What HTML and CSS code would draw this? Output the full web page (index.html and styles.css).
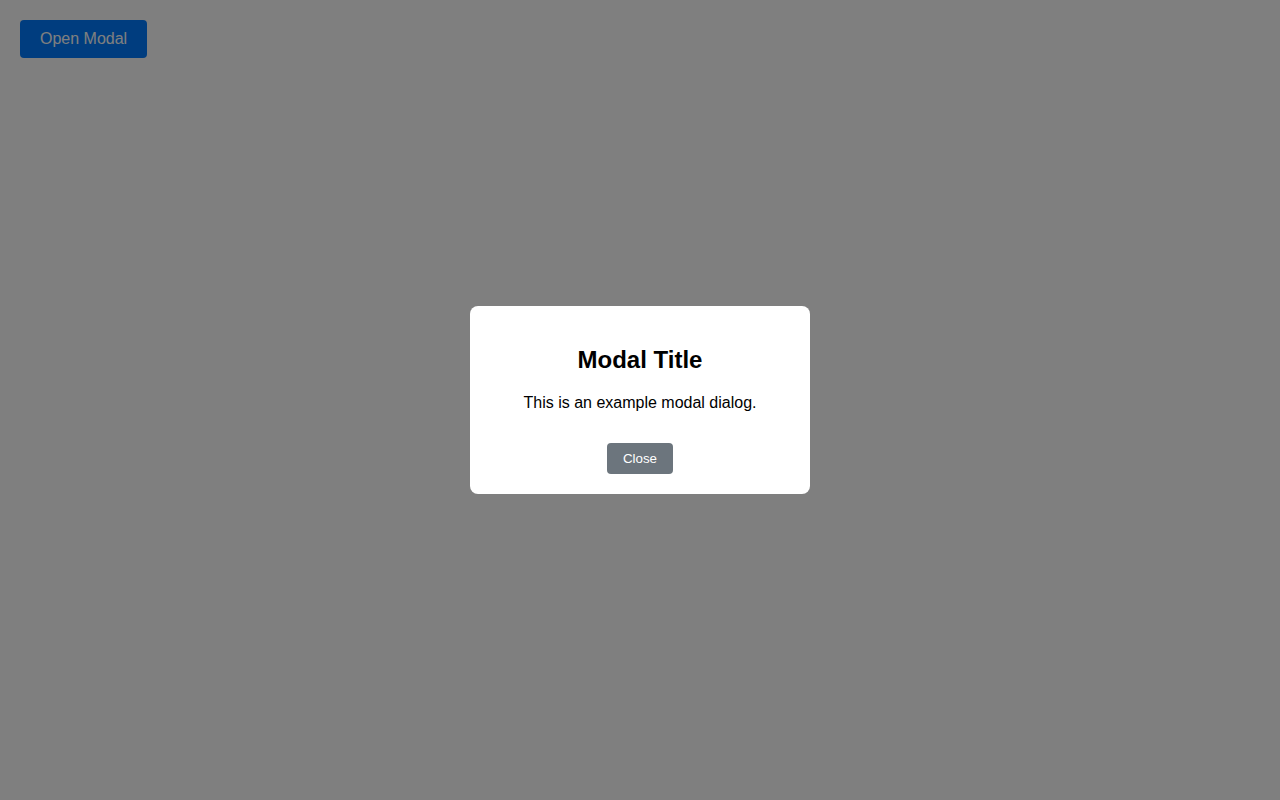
FILE: index.html
```html
<!DOCTYPE html>
<html lang="en">
<head>
    <meta charset="UTF-8">
    <meta name="viewport" content="width=device-width, initial-scale=1.0">
    <title>Modal Example</title>
    <link rel="stylesheet" href="styles.css">
</head>
<body>

    <button class="open-btn" id="openModal">Open Modal</button>

    <div class="overlay" id="modalOverlay">
        <div class="modal">
            <h2>Modal Title</h2>
            <p>This is an example modal dialog.</p>
            <button class="close-btn" id="closeModal">Close</button>
        </div>
    </div>

</body>
</html>
```

FILE: styles.css
```css
body {
    font-family: 'Liberation Sans', Arial, sans-serif;
    margin: 0;
    padding: 20px;
    background: white;
}
.open-btn {
    font-family: inherit;
    font-size: 16px;
    padding: 10px 20px;
    background-color: #007BFF;
    color: white;
    border: none;
    border-radius: 4px;
    cursor: pointer;
}
.overlay {
    position: fixed;
    inset: 0;
    background: rgba(0, 0, 0, 0.5);
    display: flex;
    align-items: center;
    justify-content: center;
}
.modal {
    background: white;
    width: 300px;
    padding: 20px;
    border-radius: 8px;
    text-align: center;
}
.modal h2 {
    font-size: 24px;
    margin: 20px 0;
}
.modal p {
    font-size: 16px;
    margin: 16px 0;
}
.close-btn {
    font-family: inherit;
    font-size: 13.33px;
    margin-top: 15px;
    padding: 8px 16px;
    background-color: #6c757d;
    color: white;
    border: none;
    border-radius: 4px;
    cursor: pointer;
}
```
